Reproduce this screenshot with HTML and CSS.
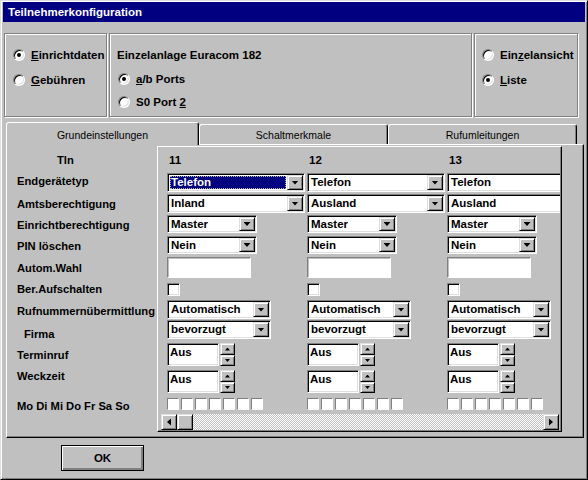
FILE: index.html
```html
<!DOCTYPE html>
<html lang="de">
<head>
<meta charset="utf-8">
<title>Teilnehmerkonfiguration</title>
<link rel="stylesheet" href="styles.css">
</head>
<body>
<div class="window">
  <div class="titlebar">Teilnehmerkonfiguration</div>

  <div class="groups">
    <div class="group g1">
      <div class="opt"><span class="radio checked"></span><span><u>E</u>inrichtdaten</span></div>
      <div class="opt"><span class="radio"></span><span><u>G</u>ebühren</span></div>
    </div>
    <div class="group g2">
      <div class="opt">Einzelanlage Euracom 182</div>
      <div class="opt sub"><span class="radio checked"></span><span><u>a</u>/b Ports</span></div>
      <div class="opt sub"><span class="radio"></span><span>S0 Port <u>2</u></span></div>
    </div>
    <div class="group g3">
      <div class="opt"><span class="radio"></span><span>Ein<u>z</u>elansicht</span></div>
      <div class="opt"><span class="radio checked"></span><span><u>L</u>iste</span></div>
    </div>
  </div>

  <div class="tabs">
    <div class="tab active t1">Grundeinstellungen</div>
    <div class="tab t2">Schaltmerkmale</div>
    <div class="tab t3">Rufumleitungen</div>
  </div>

  <div class="panel">
    <div class="labels">
      <div class="lbl tln">Tln</div>
      <div class="lbl up2">Endgerätetyp</div>
      <div class="lbl">Amtsberechtigung</div>
      <div class="lbl">Einrichtberechtigung</div>
      <div class="lbl">PIN löschen</div>
      <div class="lbl">Autom.Wahl</div>
      <div class="lbl">Ber.Aufschalten</div>
      <div class="lbl dn1">Rufnummernübermittlung</div>
      <div class="lbl dn3 firma">Firma</div>
      <div class="lbl">Terminruf</div>
      <div class="lbl up6">Weckzeit</div>
      <div class="lbl dn1">Mo Di Mi Do Fr Sa So</div>
    </div>

    <div class="inner">
      <div class="viewport">
        <div class="cols">
          <div class="col">
            <div class="hdr">11</div>
            <div class="combo wide"><span class="val sel">Telefon</span><span class="dd raised"></span></div>
            <div class="combo wide"><span class="val">Inland</span><span class="dd raised"></span></div>
            <div class="combo narrow"><span class="val">Master</span><span class="dd raised"></span></div>
            <div class="combo narrow"><span class="val">Nein</span><span class="dd raised"></span></div>
            <div class="field"></div>
            <div class="check"></div>
            <div class="combo mid mt1"><span class="val">Automatisch</span><span class="dd raised"></span></div>
            <div class="combo mid"><span class="val">bevorzugt</span><span class="dd raised"></span></div>
            <div class="spin"><div class="spin-val">Aus</div><div class="spin-btns"><span class="up raised"></span><span class="down raised"></span></div></div>
            <div class="spin"><div class="spin-val">Aus</div><div class="spin-btns"><span class="up raised"></span><span class="down raised"></span></div></div>
            <div class="days"><span class="box"></span><span class="box"></span><span class="box"></span><span class="box"></span><span class="box"></span><span class="box"></span><span class="box"></span></div>
          </div>
          <div class="col">
            <div class="hdr">12</div>
            <div class="combo wide"><span class="val">Telefon</span><span class="dd raised"></span></div>
            <div class="combo wide"><span class="val">Ausland</span><span class="dd raised"></span></div>
            <div class="combo narrow"><span class="val">Master</span><span class="dd raised"></span></div>
            <div class="combo narrow"><span class="val">Nein</span><span class="dd raised"></span></div>
            <div class="field"></div>
            <div class="check"></div>
            <div class="combo mid mt1"><span class="val">Automatisch</span><span class="dd raised"></span></div>
            <div class="combo mid"><span class="val">bevorzugt</span><span class="dd raised"></span></div>
            <div class="spin"><div class="spin-val">Aus</div><div class="spin-btns"><span class="up raised"></span><span class="down raised"></span></div></div>
            <div class="spin"><div class="spin-val">Aus</div><div class="spin-btns"><span class="up raised"></span><span class="down raised"></span></div></div>
            <div class="days"><span class="box"></span><span class="box"></span><span class="box"></span><span class="box"></span><span class="box"></span><span class="box"></span><span class="box"></span></div>
          </div>
          <div class="col">
            <div class="hdr">13</div>
            <div class="combo wide"><span class="val">Telefon</span><span class="dd raised"></span></div>
            <div class="combo wide"><span class="val">Ausland</span><span class="dd raised"></span></div>
            <div class="combo narrow"><span class="val">Master</span><span class="dd raised"></span></div>
            <div class="combo narrow"><span class="val">Nein</span><span class="dd raised"></span></div>
            <div class="field"></div>
            <div class="check"></div>
            <div class="combo mid mt1"><span class="val">Automatisch</span><span class="dd raised"></span></div>
            <div class="combo mid"><span class="val">bevorzugt</span><span class="dd raised"></span></div>
            <div class="spin"><div class="spin-val">Aus</div><div class="spin-btns"><span class="up raised"></span><span class="down raised"></span></div></div>
            <div class="spin"><div class="spin-val">Aus</div><div class="spin-btns"><span class="up raised"></span><span class="down raised"></span></div></div>
            <div class="days"><span class="box"></span><span class="box"></span><span class="box"></span><span class="box"></span><span class="box"></span><span class="box"></span><span class="box"></span></div>
          </div>
        </div>
        <div class="hscroll">
          <span class="sb-btn left raised"></span>
          <span class="sb-thumb raised"></span>
          <span class="sb-track"></span>
          <span class="sb-btn right raised"></span>
        </div>
      </div>
    </div>
  </div>

  <div class="footer">
    <button class="ok">OK</button>
  </div>
</div>
</body>
</html>
```

FILE: styles.css
```css
* { box-sizing: border-box; }

html, body {
  margin: 0;
  padding: 0;
  background: #c0c0c0;
}

body {
  font-family: "Liberation Sans", Arial, sans-serif;
  font-size: 11.5px;
  font-weight: bold;
  color: #000;
}

u { text-decoration: underline; text-underline-offset: 1px; }

.window {
  width: 588px;
  height: 480px;
  overflow: hidden;
  background: #c0c0c0;
  border: 1px solid;
  border-color: #dfdfdf #000 #000 #dfdfdf;
  box-shadow: inset 1px 1px #fff, inset -1px -1px #808080;
  padding: 1px 2px;
  display: flex;
  flex-direction: column;
}

.titlebar {
  flex: none;
  height: 20px;
  line-height: 20px;
  background: #000080;
  color: #fff;
  padding-left: 5px;
  font-size: 11.5px;
}

/* ---- top group frames ---- */
.groups {
  flex: none;
  display: flex;
  gap: 2px;
  height: 84px;
  margin: 11px 0 0 1px;
}

.group {
  height: 84px;
  border: 1px solid #808080;
  box-shadow: inset 1px 1px #fff, 1px 1px #fff;
  padding: 8px 0 0 7px;
}
.g1 { width: 103px; padding-left: 8px; }
.g2 { width: 363px; }
.g3 { width: 104px; }

.opt {
  display: flex;
  align-items: center;
  gap: 6px;
  height: 25px;
  white-space: nowrap;
}
.opt.sub { height: 23px; padding-left: 1px; }

.radio {
  flex: none;
  position: relative;
  width: 12px;
  height: 12px;
  border-radius: 50%;
  background: #fff;
  border: 1px solid;
  border-color: #808080 #fff #fff #808080;
  box-shadow: inset 1px 1px #000, inset -1px -1px #dfdfdf;
}
.radio.checked::after {
  content: "";
  position: absolute;
  left: 3px;
  top: 3px;
  width: 4px;
  height: 4px;
  border-radius: 50%;
  background: #000;
}

/* ---- tabs ---- */
.tabs {
  flex: none;
  display: flex;
  align-items: flex-end;
  height: 22px;
  margin: 5px 0 0 3px;
}

.tab {
  height: 20px;
  display: flex;
  align-items: center;
  justify-content: center;
  font-weight: normal;
  font-size: 10.5px;
  background: #c0c0c0;
  border: 1px solid;
  border-bottom: none;
  border-color: #fff #000 transparent #fff;
  box-shadow: inset -1px 0 #808080;
  border-radius: 3px 3px 0 0;
  padding-top: 1px;
}
.t1 { width: 193px; }
.t2 { width: 189px; }
.t3 { width: 189px; }
.tab.active {
  height: 23px;
  margin-bottom: -1px;
  position: relative;
  z-index: 1;
}

/* ---- tab panel ---- */
.panel {
  flex: none;
  display: flex;
  width: 578px;
  height: 294px;
  margin-left: 3px;
  border: 1px solid;
  border-color: #fff #000 #000 #fff;
  box-shadow: inset -1px -1px #808080;
  padding: 1px 21px 5px 0;
}

.labels,
.col {
  display: grid;
  grid-template-rows: 26px 21px 21px 21px 21px 23px 19px 21px 22px 27px 27px 17px;
  align-content: start;
}

.labels {
  flex: none;
  width: 150px;
  padding: 1px 0 0 10px;
  font-size: 11.2px;
}

.lbl {
  align-self: center;
  line-height: 13px;
  white-space: nowrap;
}
.lbl.tln { padding-left: 40px; }
.lbl.firma { padding-left: 7px; }
.lbl.up2 { padding-bottom: 4px; }
.lbl.up6 { padding-bottom: 12px; }
.lbl.dn1 { padding-top: 3px; }
.lbl.dn3 { padding-top: 6px; }

.inner {
  flex: none;
  width: 405px;
  height: 286px;
  border: 1px solid;
  border-color: #fff #000 #000 #fff;
}

.viewport {
  width: 403px;
  height: 284px;
  overflow: hidden;
  border-right: 1px solid #808080;
  border-bottom: 1px solid #808080;
  display: flex;
  flex-direction: column;
}

.cols {
  flex: none;
  display: flex;
  height: 266px;
  padding-left: 9px;
}

.col {
  flex: none;
  width: 140px;
  align-items: start;
}

.hdr {
  align-self: center;
  line-height: 13px;
  padding-left: 2px;
}

/* ---- 3D helpers ---- */
.raised {
  background: #c0c0c0;
  border: 1px solid;
  border-color: #dfdfdf #000 #000 #dfdfdf;
  box-shadow: inset 1px 1px #fff, inset -1px -1px #808080;
  display: flex;
  align-items: center;
  justify-content: center;
}

/* ---- combo boxes ---- */
.combo {
  display: flex;
  height: 19px;
  background: #fff;
  border: 1px solid;
  border-color: #808080 #fff #fff #808080;
  box-shadow: inset 1px 1px #000, inset -1px -1px #dfdfdf;
  padding: 1px;
}
.combo.wide { width: 138px; }
.combo.narrow { width: 90px; height: 18px; }
.combo.mid { width: 104px; }
.mt1 { margin-top: 1px; }

.val {
  flex: 1;
  min-width: 0;
  overflow: hidden;
  white-space: nowrap;
  padding-left: 2px;
  line-height: 15px;
}
.narrow .val { line-height: 14px; }
.val.sel {
  margin: 1px;
  padding-left: 1px;
  line-height: 13px;
  background: #000080;
  color: #fff;
  outline: 1px dotted #b8b890;
  outline-offset: -1px;
}

.dd {
  flex: none;
  width: 16px;
}
.dd::after {
  content: "";
  width: 7px;
  height: 4px;
  background: #000;
  clip-path: polygon(0 0, 100% 0, 50% 100%);
}

/* ---- plain fields ---- */
.field {
  width: 84px;
  height: 21px;
  background: #fff;
  border: 1px solid;
  border-color: #808080 #fff #fff #808080;
  box-shadow: inset 1px 1px #c0c0c0;
}

.check {
  width: 13px;
  height: 13px;
  margin-top: 3px;
  background: #fff;
  border: 1px solid;
  border-color: #808080 #fff #fff #808080;
  box-shadow: inset 1px 1px #000, inset -1px -1px #dfdfdf;
}

/* ---- spin boxes ---- */
.spin {
  display: flex;
  margin-top: 1px;
  height: 23px;
}
.spin-val {
  width: 52px;
  height: 23px;
  background: #fff;
  border: 1px solid;
  border-color: #808080 #fff #fff #808080;
  box-shadow: inset 1px 1px #000, inset -1px -1px #dfdfdf;
  padding: 2px 0 0 2px;
  line-height: 13px;
}
.spin-btns {
  width: 15px;
  margin-left: 1px;
  display: flex;
  flex-direction: column;
}
.spin-btns .up { height: 12px; }
.spin-btns .down { height: 11px; }
.spin-btns .up::after,
.spin-btns .down::after {
  content: "";
  width: 5px;
  height: 3px;
  background: #000;
}
.spin-btns .up::after { clip-path: polygon(50% 0, 100% 100%, 0 100%); }
.spin-btns .down::after { clip-path: polygon(0 0, 100% 0, 50% 100%); }

/* ---- weekday boxes ---- */
.days {
  display: flex;
  gap: 2px;
  margin-top: 2px;
}
.box {
  width: 12px;
  height: 12px;
  background: #fff;
  border: 1px solid;
  border-color: #808080 #fff #fff #808080;
}

/* ---- horizontal scrollbar ---- */
.hscroll {
  flex: none;
  display: flex;
  height: 16px;
  margin: 1px 1px 0 3px;
  background-color: #c0c0c0;
  background-image: conic-gradient(#fff 25%, #c0c0c0 0 50%, #fff 0 75%, #c0c0c0 0);
  background-size: 2px 2px;
}
.sb-btn,
.sb-thumb {
  flex: none;
  width: 16px;
  height: 16px;
}
.sb-track { flex: 1; }
.sb-btn.left::after,
.sb-btn.right::after {
  content: "";
  width: 4px;
  height: 7px;
  background: #000;
}
.sb-btn.left::after { clip-path: polygon(100% 0, 100% 100%, 0 50%); }
.sb-btn.right::after { clip-path: polygon(0 0, 100% 50%, 0 100%); }

/* ---- footer ---- */
.footer {
  flex: none;
  padding: 7px 0 0 58px;
}

.ok {
  display: flex;
  align-items: center;
  justify-content: center;
  width: 83px;
  height: 26px;
  margin: 0;
  padding: 0;
  font-family: "Liberation Sans", Arial, sans-serif;
  font-size: 11.5px;
  font-weight: bold;
  color: #000;
  background: #c0c0c0;
  border: 1px solid #000;
  box-shadow: inset 1px 1px #fff, inset -2px -2px #808080;
}
```
